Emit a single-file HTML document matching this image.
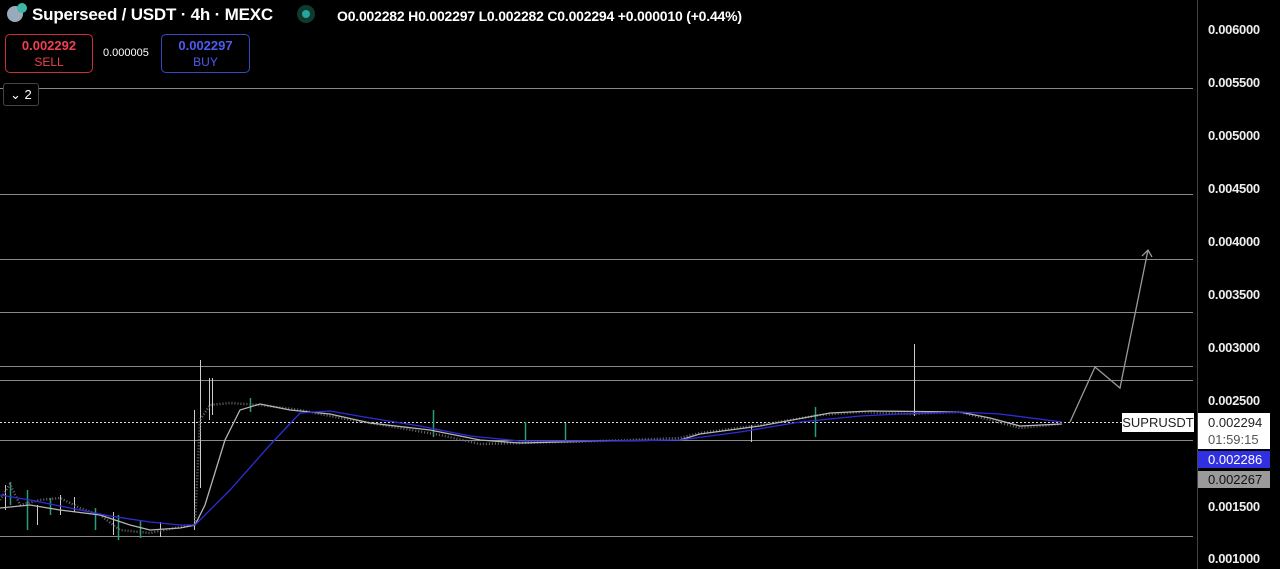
<!DOCTYPE html>
<html><head><meta charset="utf-8"><style>
body{margin:0;width:1280px;height:569px;background:#000;overflow:hidden;font-family:"Liberation Sans","DejaVu Sans",sans-serif;color:#fff;position:relative}
.ax{position:absolute;left:1208px;font-size:13px;color:#eee;font-weight:bold;letter-spacing:-0.3px}
.tag{position:absolute;left:1198px;width:72px;height:17px;font-size:13px;line-height:17px;padding-left:10px;box-sizing:border-box}
</style></head><body>
<svg width="1280" height="569" style="position:absolute;left:0;top:0">
<g stroke="#8a8a8a" stroke-width="1">
<line x1="0" y1="88.5" x2="1193" y2="88.5"/>
<line x1="0" y1="194.5" x2="1193" y2="194.5"/>
<line x1="0" y1="259.5" x2="1193" y2="259.5"/>
<line x1="0" y1="312.5" x2="1193" y2="312.5"/>
<line x1="0" y1="366.5" x2="1193" y2="366.5"/>
<line x1="0" y1="380.5" x2="1193" y2="380.5"/>
<line x1="0" y1="440.5" x2="1193" y2="440.5"/>
<line x1="0" y1="536.5" x2="1193" y2="536.5"/>
</g>
<line x1="1197.5" y1="0" x2="1197.5" y2="569" stroke="#444"/>
<line x1="0" y1="422.5" x2="1122" y2="422.5" stroke="#ddd" stroke-dasharray="2,2"/>
<g stroke="#ccc" stroke-width="1">
<line x1="200.5" y1="360" x2="200.5" y2="488"/>
<line x1="194.5" y1="410" x2="194.5" y2="530"/>
<line x1="209.5" y1="378" x2="209.5" y2="420"/>
<line x1="212.5" y1="378" x2="212.5" y2="415"/>
<line x1="914.5" y1="344" x2="914.5" y2="416"/>
<line x1="751.5" y1="425" x2="751.5" y2="442"/>
<line x1="5.5" y1="485" x2="5.5" y2="510"/>
<line x1="37.5" y1="505" x2="37.5" y2="525"/>
<line x1="60.5" y1="495" x2="60.5" y2="515"/>
<line x1="74.5" y1="497" x2="74.5" y2="512"/>
<line x1="113.5" y1="512" x2="113.5" y2="535"/>
<line x1="160.5" y1="522" x2="160.5" y2="537"/>
</g>
<g stroke="#2a9d7c" stroke-width="1.5">
<line x1="433.5" y1="410" x2="433.5" y2="437"/>
<line x1="525.5" y1="422" x2="525.5" y2="443"/>
<line x1="565.5" y1="423" x2="565.5" y2="441"/>
<line x1="815.5" y1="407" x2="815.5" y2="437"/>
<line x1="10.5" y1="482" x2="10.5" y2="505"/>
<line x1="27.5" y1="490" x2="27.5" y2="530"/>
<line x1="50.5" y1="498" x2="50.5" y2="515"/>
<line x1="95.5" y1="508" x2="95.5" y2="530"/>
<line x1="118.5" y1="515" x2="118.5" y2="540"/>
<line x1="140.5" y1="520" x2="140.5" y2="538"/>
<line x1="250.5" y1="398" x2="250.5" y2="412"/>
</g>
<path d="M0 500 L10 484 L20 505 L40 500 L60 498 L80 508 L100 515 L120 530 L150 533 L180 527 L195 525 L200 420 L210 405 L230 403 L260 405 L300 410 L340 418 L400 428 L440 435 L480 444 L520 443 L600 441 L680 438 L700 433 L760 425 L820 415 L860 412 L910 414 L960 412 L990 420 L1020 428 L1060 424" stroke="#6a6a6a" stroke-width="2.5" fill="none" stroke-dasharray="1,2"/>
<path d="M0 508 L30 505 L60 510 L100 515 L130 525 L150 530 L180 528 L195 525 L205 505 L225 440 L240 410 L260 404 L290 410 L330 414 L370 423 L430 430 L480 440 L520 443 L600 441 L680 440 L700 434 L760 426 L830 413 L870 411 L960 412 L990 418 L1020 426 L1062 424" stroke="#b5b5b5" stroke-width="1.3" fill="none"/>
<path d="M0 495 L30 500 L70 508 L110 516 L150 522 L180 525 L195 525 L230 490 L270 445 L300 413 L330 411 L370 418 L420 426 L470 436 L520 441 L600 441 L680 440 L740 432 L800 422 L860 416 L900 414 L960 412 L1000 414 L1062 422" stroke="#2d2dd6" stroke-width="1.3" fill="none"/>
<path d="M1070 422 L1095 367 L1120 388 L1148 250 M1142 256 L1148 250 L1152 257" stroke="#9a9a9a" stroke-width="1.3" fill="none"/>
</svg>
<div style="position:absolute;left:7px;top:6px;width:16px;height:16px;border-radius:50%;background:#9ab"></div>
<div style="position:absolute;left:17px;top:3px;width:10px;height:10px;border-radius:50%;background:#3cb8a8"></div>
<div style="position:absolute;left:32px;top:5px;font-size:17px;font-weight:bold;letter-spacing:-0.2px">Superseed / USDT · 4h · MEXC</div>
<div style="position:absolute;left:297px;top:5px;width:18px;height:18px;border-radius:50%;background:#0e3a30"></div>
<div style="position:absolute;left:302px;top:10px;width:8px;height:8px;border-radius:50%;background:#26a69a"></div>
<div style="position:absolute;left:337px;top:8px;font-size:14px;font-weight:bold;letter-spacing:-0.2px">O0.002282 H0.002297 L0.002282 C0.002294 +0.000010 (+0.44%)</div>
<div style="position:absolute;left:5px;top:34px;width:88px;height:39px;border:1px solid #c9303b;border-radius:5px;box-sizing:border-box;text-align:center;font-size:13px;line-height:16px;padding-top:3px"><b style="color:#f04050">0.002292</b><br><span style="color:#f04050;font-size:12px">SELL</span></div>
<div style="position:absolute;left:103px;top:47px;font-size:11px">0.000005</div>
<div style="position:absolute;left:161px;top:34px;width:89px;height:39px;border:1px solid #3848c0;border-radius:5px;box-sizing:border-box;text-align:center;font-size:13px;line-height:16px;padding-top:3px"><b style="color:#4c5cf0">0.002297</b><br><span style="color:#4c5cf0;font-size:12px">BUY</span></div>
<div style="position:absolute;left:3px;top:83px;width:36px;height:23px;border:1px solid #444;border-radius:3px;background:#000;box-sizing:border-box;font-size:13px;line-height:21px;padding-left:6px">⌄ 2</div>
<div class="ax" style="top:22px">0.006000</div>
<div class="ax" style="top:75px">0.005500</div>
<div class="ax" style="top:128px">0.005000</div>
<div class="ax" style="top:181px">0.004500</div>
<div class="ax" style="top:234px">0.004000</div>
<div class="ax" style="top:287px">0.003500</div>
<div class="ax" style="top:340px">0.003000</div>
<div class="ax" style="top:393px">0.002500</div>
<div class="ax" style="top:499px">0.001500</div>
<div class="ax" style="top:551px">0.001000</div>
<div style="position:absolute;left:1122px;top:413px;width:72px;height:19px;background:#fff;color:#222;font-size:13px;line-height:19px;text-align:center">SUPRUSDT</div>
<div style="position:absolute;left:1198px;top:413px;width:72px;height:36px;background:#fff;color:#222;font-size:13px;line-height:17px;padding:1px 0 0 10px;box-sizing:border-box">0.002294<br><span style="color:#555">01:59:15</span></div>
<div class="tag" style="top:451px;background:#3030e0;color:#fff">0.002286</div>
<div class="tag" style="top:471px;background:#9a9a9a;color:#111">0.002267</div>
</body></html>
